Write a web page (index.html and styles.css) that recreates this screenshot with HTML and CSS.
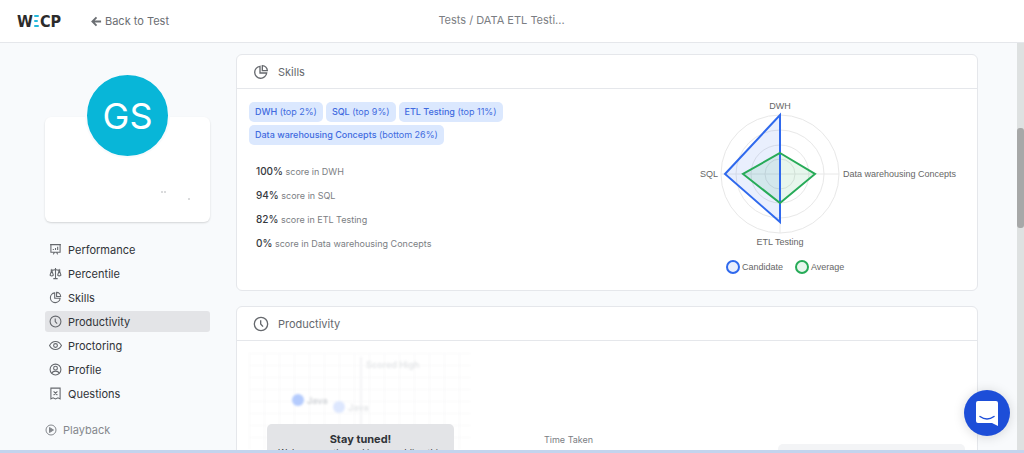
FILE: index.html
```html
<!DOCTYPE html>
<html lang="en">
    <head>
        <meta charset="UTF-8">
        <meta name="viewport" content="width=device-width, initial-scale=1.0">
        <title>WECP - Candidate Report</title>
        <link rel="stylesheet" href="styles.css">
    </head>
    <body>
        <!-- shared icons -->
        <svg class="sprite" aria-hidden="true">
            <symbol id="icon-pie" viewBox="0 0 24 24">
                <path d="M10.5 3.5A9 9 0 1 0 20.5 13.5H10.5z"/>
                <path d="M14 2.5V10h7.5A7.5 7.5 0 0 0 14 2.5z"/>
            </symbol>
            <symbol id="icon-clock" viewBox="0 0 24 24">
                <circle cx="12" cy="12" r="10"/>
                <path d="M11.5 6.5V12l3.5 4"/>
            </symbol>
        </svg>

        <header class="topbar">
            <svg class="logo" viewBox="0 0 45 18" role="img" aria-label="WECP">
                <text x="0" y="15">W</text>
                <path d="M18 4h3M18 9h2M18 14h3" stroke="#22b8dc" stroke-width="2" stroke-linecap="round"/>
                <text x="23" y="15">CP</text>
            </svg>
            <a class="back" href="#">
                <svg viewBox="0 0 12 12"><path d="M11 6H1.500M6 1.500L1.500 6 6 10.500"/></svg>
                Back to Test
            </a>
            <div class="title">Tests / DATA ETL Testi...</div>
        </header>

        <div class="page">
            <aside class="sidebar">
                <div class="profile">
                    <div class="avatar">GS</div>
                    <svg class="marks" viewBox="0 0 165 14" aria-hidden="true"><path d="M116 4h2M119 4h2M143 11h2"/></svg>
                </div>
                <nav class="menu">
                    <a href="#"><svg viewBox="0 0 24 24"><path d="M2 3h20M3.500 3v14h17V3M8 21l2-4M16 21l-2-4M8 13v-2M12 13V9M16 13V7"/></svg>Performance</a>
                    <a href="#"><svg viewBox="0 0 24 24"><path d="M12 2v19M8 21.500h8M3 5.500q5 1 9-1 4 2 9 1M5 6L2 15q3 3 6 0zM19 6l-3 9q3 3 6 0z"/></svg>Percentile</a>
                    <a href="#"><svg><use href="#icon-pie"/></svg>Skills</a>
                    <a href="#" class="active"><svg><use href="#icon-clock"/></svg>Productivity</a>
                    <a href="#"><svg viewBox="0 0 24 24"><path d="M1 12q4-7.500 11-7.500T23 12q-4 7.500-11 7.500T1 12z"/><circle cx="12" cy="12" r="3.500"/></svg>Proctoring</a>
                    <a href="#"><svg viewBox="0 0 24 24"><circle cx="12" cy="12" r="10"/><circle cx="12" cy="9.500" r="3.500"/><path d="M5 19q2-4 7-4t7 4"/></svg>Profile</a>
                    <a href="#"><svg viewBox="0 0 24 24"><path d="M3.500 2h17v20l-4-2-4.500 2-4.500-2-4 2zM8.500 15l7-7M8.500 8l7 7"/></svg>Questions</a>
                </nav>
                <a class="playback" href="#">
                    <svg viewBox="0 0 24 24"><circle cx="12" cy="12" r="10"/><path d="M9 7l8 5-8 5z" fill="currentColor"/></svg>
                    Playback
                </a>
            </aside>

            <main class="content">
                <section class="card">
                    <h2><svg><use href="#icon-pie"/></svg>Skills</h2>
                    <div class="skills">
                        <div class="skills-info">
                            <div class="tags">
                                <span class="tag"><b>DWH</b> (top 2%)</span>
                                <span class="tag"><b>SQL</b> (top 9%)</span>
                                <span class="tag"><b>ETL Testing</b> (top 11%)</span>
                                <span class="tag"><b>Data warehousing Concepts</b> (bottom 26%)</span>
                            </div>
                            <ul class="scores">
                                <li><span>100%</span> score in DWH</li>
                                <li><span>94%</span> score in SQL</li>
                                <li><span>82%</span> score in ETL Testing</li>
                                <li><span>0%</span> score in Data warehousing Concepts</li>
                            </ul>
                        </div>
                        <svg class="radar" viewBox="0 0 270 190" role="img" aria-label="Skills radar chart">
                            <g class="grid-lines">
                                <circle cx="90" cy="79" r="15"/>
                                <circle cx="90" cy="79" r="29"/>
                                <circle cx="90" cy="79" r="44"/>
                                <circle cx="90" cy="79" r="59"/>
                                <path d="M90 20v118M31 79h118"/>
                            </g>
                            <path class="average" d="M90 58L125 79 90 108 53 79z"/>
                            <path class="candidate" d="M90 20V127L35 79z"/>
                            <path class="average-line" d="M90 58L125 79 90 108 53 79z"/>
                            <text x="90" y="14" text-anchor="middle">DWH</text>
                            <text x="28" y="82" text-anchor="end">SQL</text>
                            <text x="153" y="82">Data warehousing Concepts</text>
                            <text x="90" y="150" text-anchor="middle">ETL Testing</text>
                            <circle class="candidate" cx="43" cy="172" r="6"/>
                            <text x="52" y="175">Candidate</text>
                            <circle class="average" cx="112" cy="172" r="6"/>
                            <circle class="average-line" cx="112" cy="172" r="6"/>
                            <text x="121" y="175">Average</text>
                        </svg>
                    </div>
                </section>

                <section class="card">
                    <h2><svg><use href="#icon-clock"/></svg>Productivity</h2>
                    <div class="productivity">
                        <div class="preview">
                            <svg class="scatter" viewBox="0 0 222 96" aria-hidden="true">
                                <defs>
                                    <pattern id="cells" width="15" height="12" patternUnits="userSpaceOnUse">
                                        <path d="M15 0H0V12" fill="none" stroke="#f8f8f9"/>
                                    </pattern>
                                </defs>
                                <rect width="222" height="96" fill="url(#cells)"/>
                                <path d="M112 4v92" stroke="#f3f4f6" stroke-width="2"/>
                                <text x="117" y="15" fill="#e4e6e8">Scored High</text>
                                <circle cx="49" cy="47" r="6" fill="#b4cbfd"/>
                                <text x="58" y="51" fill="#cfd2d6">Java</text>
                                <circle cx="90" cy="54" r="6" fill="#dde7fe"/>
                                <text x="99" y="58" fill="#e4e6e8">Java</text>
                            </svg>
                            <div class="notice">
                                <strong>Stay tuned!</strong>
                                <p>We're currently working on adding this</p>
                            </div>
                        </div>
                        <div class="time">
                            <span>Time Taken</span>
                            <div class="time-bar"></div>
                        </div>
                    </div>
                </section>
            </main>
            <div class="scrollbar"><div class="thumb"></div></div>
        </div>

        <button class="chat" aria-label="Open chat">
            <svg viewBox="0 0 22 25"><path d="M2 0h18q2 0 2 2v23l-6-3H2q-2 0-2-2V2q0-2 2-2z" fill="#fff"/><path d="M4 15.500q7 5 14 0" fill="none" stroke="#1d4ed8" stroke-width="1.500" stroke-linecap="round"/></svg>
        </button>
    </body>
</html>
```

FILE: styles.css
```css
* {
    box-sizing: border-box;
}
body {
    margin: 0;
    height: 100vh;
    display: flex;
    flex-direction: column;
    overflow: hidden;
    font-family: Inter, sans-serif;
    font-size: 11px;
    color: #303338;
    background-color: #f8fafc;
    border-bottom: 3px solid #c3d4ee;
}
a {
    color: inherit;
    text-decoration: none;
}
svg {
    display: block;
    flex: none;
    fill: none;
    stroke: currentColor;
    stroke-width: 2;
}
.sprite {
    display: none;
}
.topbar {
    flex: none;
    height: 43px;
    display: grid;
    grid-template-columns: 74px 1fr auto 1fr 112px;
    align-items: center;
    padding-left: 17px;
    background-color: #fff;
    border-bottom: 1px solid #e5e7eb;
}
.logo {
    width: 45px;
    height: 18px;
    overflow: visible;
    font-family: "Liberation Sans Narrow", "DejaVu Sans Condensed", "Liberation Sans", sans-serif;
    font-size: 16px;
    font-weight: bold;
    stroke: none;
}
.logo text {
    fill: #2b2b2b;
}
.back {
    display: flex;
    align-items: center;
    gap: 3px;
    color: #6b6e73;
}
.back svg {
    width: 11px;
    height: 11px;
}
.title {
    line-height: 16px;
    padding-bottom: 2px;
    color: #7b7e83;
}
.page {
    flex: 1;
    min-height: 0;
    display: flex;
    padding-left: 45px;
}
.sidebar {
    width: 165px;
    flex: none;
    padding-top: 74px;
    margin-right: 26px;
}
.profile {
    display: flex;
    flex-direction: column;
    height: 105px;
    background-color: #fff;
    border-radius: 6px;
    box-shadow: 0 1px 2px rgba(0, 0, 0, 0.15);
}
.avatar {
    width: 85px;
    height: 85px;
    margin: -44px auto 0;
    display: flex;
    align-items: center;
    justify-content: center;
    font-size: 36px;
    color: #fff;
    background-color: #08b6d8;
    border: 2px solid #f8fafc;
    border-radius: 50%;
}
.marks {
    width: 100%;
    height: 14px;
    margin-top: 30px;
    stroke: #b5b7ba;
    stroke-width: 1;
}
.menu {
    display: flex;
    flex-direction: column;
    gap: 3px;
    margin-top: 17px;
}
.menu a {
    display: flex;
    align-items: center;
    gap: 6px;
    height: 21px;
    padding-left: 4px;
    border-radius: 3px;
}
.menu svg {
    width: 13px;
    height: 13px;
    color: #65686d;
}
.menu .active {
    background-color: #e3e4e7;
}
.playback {
    display: flex;
    align-items: center;
    gap: 6px;
    margin-top: 19px;
    color: #85888d;
}
.playback svg {
    width: 12px;
    height: 12px;
}
.content {
    flex: 1;
    padding-top: 11px;
}
.card {
    margin-bottom: 15px;
    background-color: #fff;
    border: 1px solid #e5e7eb;
    border-radius: 6px;
}
.card h2 {
    display: flex;
    align-items: center;
    gap: 9px;
    height: 34px;
    margin: 0;
    padding-left: 16px;
    font-size: 11px;
    font-weight: 400;
    color: #65686d;
    border-bottom: 1px solid #e5e7eb;
}
.card h2 svg {
    width: 16px;
    height: 16px;
}
.skills {
    display: flex;
    justify-content: space-between;
    padding: 6px 17px 5px 12px;
}
.skills-info {
    width: 300px;
    padding-top: 7px;
}
.tags {
    display: flex;
    flex-wrap: wrap;
    gap: 3px;
}
.tag {
    padding: 0 6px;
    font-size: 9px;
    line-height: 20px;
    color: #416be0;
    background-color: #dbe8fe;
    border-radius: 5px;
}
.tag b {
    font-weight: 500;
}
.scores {
    list-style: none;
    margin: 14px 0 0;
    padding: 0 0 0 7px;
    font-size: 9px;
    line-height: 24px;
    color: #7b7e83;
}
.scores li {
    height: 24px;
}
.scores span {
    font-size: 10px;
    font-weight: 500;
    color: #36393e;
}
.radar {
    width: 270px;
    height: 190px;
    font-family: "Liberation Sans", Arial, sans-serif;
    font-size: 9px;
}
.radar text {
    fill: #666;
    stroke: none;
}
.grid-lines {
    stroke: #e8e8e8;
    stroke-width: 1;
}
.candidate {
    fill: rgba(37, 99, 235, 0.1);
    stroke: #2f69ed;
}
.average {
    fill: rgba(22, 163, 74, 0.1);
    stroke: none;
}
.average-line {
    stroke: #27ab58;
}
.productivity {
    display: flex;
    align-items: flex-start;
    padding: 12px;
}
.preview {
    width: 222px;
    display: grid;
}
.preview > * {
    grid-area: 1 / 1;
}
.scatter {
    width: 222px;
    height: 96px;
    font-size: 9px;
    font-weight: 600;
    stroke: none;
    filter: blur(1px);
}
.notice {
    z-index: 1;
    margin: 71px 17px 0 18px;
    padding-top: 7px;
    text-align: center;
    line-height: 16px;
    background-color: #e3e4e7;
    border-radius: 5px;
}
.notice p {
    margin: 0;
    font-size: 9px;
    line-height: 12px;
}
.time {
    flex: 1;
    display: flex;
    align-items: flex-start;
    justify-content: space-between;
    margin: 81px 0 0 73px;
    font-size: 9px;
    color: #7b7e83;
}
.time-bar {
    width: 187px;
    height: 20px;
    margin-top: 10px;
    background-color: #f3f4f6;
    border-radius: 5px;
}
.scrollbar {
    width: 7px;
    flex: none;
    margin-left: 39px;
    padding-top: 85px;
    background-color: #dee1e1;
}
.thumb {
    height: 100px;
    background-color: #a7a8a8;
    border-radius: 3px;
}
.chat {
    position: fixed;
    right: 14px;
    bottom: 17px;
    width: 46px;
    height: 46px;
    display: flex;
    align-items: center;
    justify-content: center;
    padding: 0;
    border: none;
    border-radius: 50%;
    background-color: #1d4ed8;
    box-shadow: 0 1px 12px rgba(0, 0, 0, 0.15);
    cursor: pointer;
}
.chat svg {
    width: 22px;
    height: 25px;
    stroke: none;
}
```
